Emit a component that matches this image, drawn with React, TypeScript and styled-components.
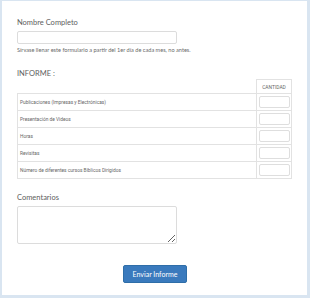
import React from "react";
import styled, { createGlobalStyle } from "styled-components";

// Data --------------------------------------------------------------------------

const rows: string[] = [
  "Publicaciones (Impresas y Electrónicas)",
  "Presentación de Videos",
  "Horas",
  "Revisitas",
  "Número de diferentes cursos Bíblicos Dirigidos",
];

// Component ---------------------------------------------------------------------

const App: React.FC = () => {
  return (
    <>
      <GlobalStyle />
      <Frame>
        <Card>
          <Label>Nombre Completo</Label>
          <TextInput type="text" />
          <Help>
            Sírvase llenar este formulario a partir del 1er día de cada mes, no
            antes.
          </Help>

          <Section>INFORME :</Section>
          <Table>
            <colgroup>
              <col style={{ width: 239 }} />
              <col style={{ width: 35 }} />
            </colgroup>
            <thead>
              <tr>
                <EmptyHead />
                <HeadCell>CANTIDAD</HeadCell>
              </tr>
            </thead>
            <tbody>
              {rows.map((row) => (
                <tr key={row}>
                  <NameCell>{row}</NameCell>
                  <QtyCell>
                    <QtyInput type="text" />
                  </QtyCell>
                </tr>
              ))}
            </tbody>
          </Table>

          <Label $top={14}>Comentarios</Label>
          <Comments />

          <Actions>
            <SubmitButton type="button">Enviar Informe</SubmitButton>
          </Actions>
        </Card>
      </Frame>
    </>
  );
};

export default App;

// Styled ------------------------------------------------------------------------

const GlobalStyle = createGlobalStyle`
  body {
    margin: 0;
    background: #ffffff;
    font-family: "Lato", "Open Sans", sans-serif;
  }
`;

const Frame = styled.div`
  width: 310px;
  height: 298px;
  box-sizing: border-box;
  padding: 1px 3px 3px 2px;
  background: #d9e5f1;
`;

const Card = styled.div`
  height: 100%;
  box-sizing: border-box;
  background: #ffffff;
  padding: 17px 0 0 15px;
  display: flex;
  flex-direction: column;
  align-items: flex-start;
`;

const Label = styled.div<{ $top?: number }>`
  margin-top: ${(p) => p.$top ?? 0}px;
  font-size: 7.5px;
  line-height: 10px;
  color: #606060;
`;

const TextInput = styled.input`
  margin-top: 3px;
  width: 160px;
  height: 13px;
  box-sizing: border-box;
  border: 1px solid #dcdcdc;
  border-radius: 2px;
  outline: none;
`;

const Help = styled.div`
  margin-top: 2px;
  font-size: 5.6px;
  line-height: 8px;
  color: #6a6a6a;
`;

const Section = styled.div`
  margin-top: 15px;
  font-size: 7.5px;
  line-height: 10px;
  color: #606060;
`;

const Table = styled.table`
  margin-top: 0;
  width: 274px;
  border-collapse: collapse;
  table-layout: fixed;
  font-family: "Roboto", "Liberation Sans", sans-serif;
`;

const EmptyHead = styled.th`
  padding: 0;
  border: none;
`;

const HeadCell = styled.th`
  height: 13px;
  padding: 0;
  border: 1px solid #e2e2e2;
  font-size: 4.9px;
  font-weight: 400;
  color: #666666;
  text-align: center;
`;

const NameCell = styled.td`
  height: 16px;
  padding: 0 0 0 2px;
  border: 1px solid #e2e2e2;
  font-size: 4.85px;
  color: #666666;
`;

const QtyCell = styled.td`
  padding: 0;
  border: 1px solid #e2e2e2;
  text-align: center;
`;

const QtyInput = styled.input`
  display: block;
  margin: 0 auto;
  width: 31px;
  height: 12px;
  box-sizing: border-box;
  border: 1px solid #dedede;
  border-radius: 2px;
  outline: none;
`;

const Comments = styled.textarea`
  margin-top: 3px;
  width: 160px;
  height: 38px;
  box-sizing: border-box;
  border: 1px solid #dcdcdc;
  border-radius: 2px;
  outline: none;
  resize: both;
`;

const Actions = styled.div`
  align-self: stretch;
  padding-right: 14px;
  margin-top: 21px;
  display: flex;
  justify-content: center;
`;

const SubmitButton = styled.button`
  width: 64px;
  height: 18px;
  padding: 0;
  border: 1px solid #2f6ea8;
  border-radius: 2px;
  background: #3a7abd;
  color: #ffffff;
  font-family: "Lato", "Open Sans", sans-serif;
  font-size: 7px;
`;
